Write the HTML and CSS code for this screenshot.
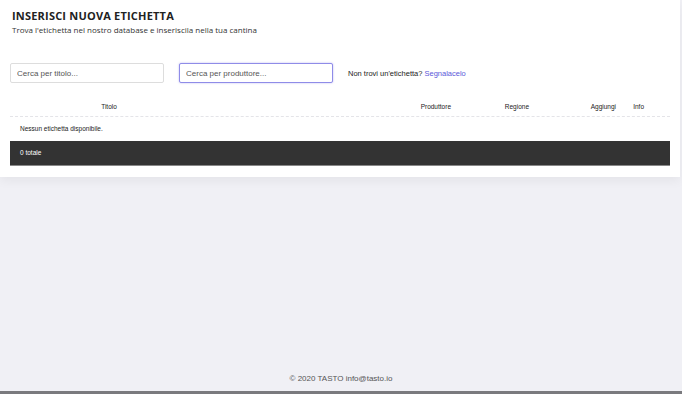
FILE: index.html
```html
<!DOCTYPE html>
<html lang="it">
<head>
    <meta charset="UTF-8">
    <meta name="viewport" content="width=device-width, initial-scale=1.0">
    <title>Inserisci nuova etichetta</title>
    <link rel="stylesheet" href="styles.css">
</head>
<body>
    <div class="page">
        <div class="card">
            <h2 class="card__title">INSERISCI NUOVA ETICHETTA</h2>
            <p class="card__subtitle">Trova l'etichetta nel nostro database e inseriscila nella tua cantina</p>

            <div class="search">
                <input class="search__input" type="text" placeholder="Cerca per titolo...">
                <input class="search__input search__input--focus" type="text" placeholder="Cerca per produttore...">
                <div class="search__hint">Non trovi un'etichetta? <a href="#" class="link">Segnalacelo</a></div>
            </div>

            <div class="table">
                <div class="table__head">
                    <div class="col col--title">Titolo</div>
                    <div class="col col--prod">Produttore</div>
                    <div class="col col--reg">Regione</div>
                    <div class="col col--add">Aggiungi</div>
                    <div class="col col--info">Info</div>
                </div>
                <div class="table__empty">Nessun etichetta disponibile.</div>
                <div class="table__foot">0 totale</div>
            </div>
        </div>

        <div class="footer">© 2020 TASTO info@tasto.io</div>
    </div>
</body>
</html>
```

FILE: styles.css
```css
html{
    font-family: "Liberation Sans", Arial, sans-serif;
}
body{
    margin: 0;
    background: #f0f0f5;
}
.page{
    height: 394px;
    display: flex;
    flex-direction: column;
    border-bottom: 3px solid #7a7a7e;
    box-sizing: border-box;
}
.card{
    width: 680px;
    background: #fff;
    padding: 9px 0 11px;
    box-shadow: 0 4px 10px rgba(0,0,0,0.05);
}
.card__title{
    font-family: "Open Sans", sans-serif;
    font-weight: 700;
    font-size: 11px;
    letter-spacing: 0.2px;
    color: #222;
    margin: 0 0 0 12px;
    line-height: 14px;
}
.card__subtitle{
    font-family: "Open Sans", sans-serif;
    font-size: 8px;
    color: #333;
    margin: 1px 0 0 12px;
    line-height: 11px;
}
.search{
    display: flex;
    align-items: center;
    margin: 28px 0 0 10px;
}
.search__input{
    width: 154px;
    height: 20px;
    box-sizing: border-box;
    border: 1px solid #ddd;
    border-radius: 2px;
    padding: 0 6px;
    font-family: "Liberation Sans", Arial, sans-serif;
    font-size: 8px;
    margin-right: 15px;
    outline: none;
}
.search__input::placeholder{
    color: #555;
}
.search__input--focus{
    border: 1px solid #8f8ce8;
    box-shadow: 0 0 2px rgba(120,110,230,0.5);
}
.search__hint{
    font-size: 7.5px;
    color: #222;
}
.link{
    color: #5b57d9;
    text-decoration: none;
}
.table{
    margin: 15px 0 0 10px;
    width: 660px;
    font-size: 6.5px;
    color: #222;
}
.table__head{
    display: flex;
    height: 17px;
    align-items: center;
    border-bottom: 1px dashed #e4e4e8;
    padding-bottom: 1px;
}
.col{
    text-align: right;
}
.col--title{
    width: 198px;
    text-align: center;
}
.col--prod{
    width: 243px;
}
.col--reg{
    width: 78px;
}
.col--add{
    width: 87px;
}
.col--info{
    width: 28px;
}
.table__empty{
    padding: 0 10px;
    height: 24px;
    line-height: 24px;
}
.table__foot{
    background: #333;
    color: #fff;
    height: 24px;
    line-height: 24px;
    padding: 0 10px;
    border-bottom: 1px solid #888;
}
.footer{
    margin-top: auto;
    text-align: center;
    font-size: 8px;
    color: #555;
    padding-bottom: 8px;
}
```
